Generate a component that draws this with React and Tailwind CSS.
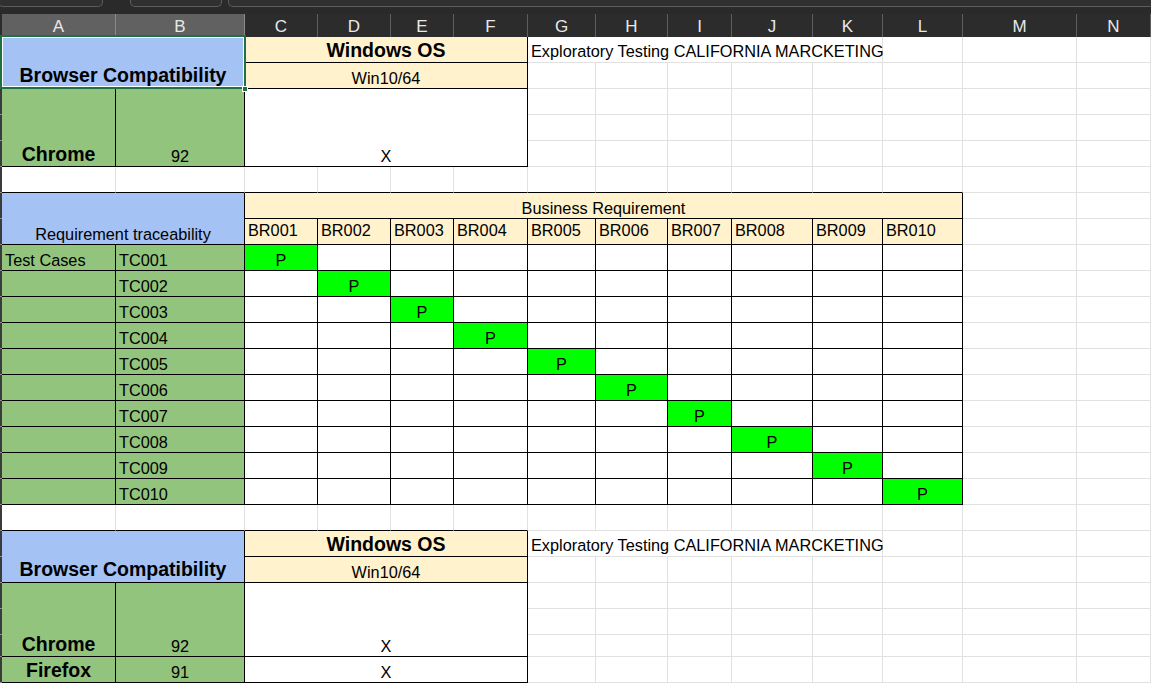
import React from "react";

const font = "font-['Liberation_Sans',Arial,sans-serif]";
const big = "text-[19.5px] font-bold leading-[24px]";
const txt = "text-[16.3px] leading-[20px]";
const tbl = "border-r border-b border-black";
const gry = "border-r border-b border-[#e1e1e1]";

const headers = ["A", "B", "C", "D", "E", "F", "G", "H", "I", "J", "K", "L", "M", "N"];

const tcRows = ["row-start-9", "row-start-10", "row-start-11", "row-start-12", "row-start-13", "row-start-14", "row-start-15", "row-start-16", "row-start-17", "row-start-18"];
const brCols = ["col-start-4", "col-start-5", "col-start-6", "col-start-7", "col-start-8", "col-start-9", "col-start-10", "col-start-11", "col-start-12", "col-start-13"];

// placed cells: at = [col, row, colSpan, rowSpan]
const cells = [
  { at: [2, 1, 2, 2], cls: `col-start-2 col-span-2 row-start-1 row-span-2 bg-[#a4c2f4] justify-center pb-[1px] ${tbl} ${big}`, body: "Browser Compatibility" },
  { at: [4, 1, 4, 1], cls: `col-start-4 col-span-4 row-start-1 bg-[#fff2cc] justify-center ${tbl} ${big}`, body: "Windows OS" },
  { at: [8, 1, 5, 1], cls: `col-start-8 col-span-5 row-start-1 bg-white pl-[3px] pb-[1px] ${gry} ${txt}`, body: "Exploratory Testing CALIFORNIA MARCKETING" },
  { at: [4, 2, 4, 1], cls: `col-start-4 col-span-4 row-start-2 bg-[#fff2cc] justify-center ${tbl} ${txt}`, body: "Win10/64" },
  { at: [2, 3, 1, 3], cls: `col-start-2 row-start-3 row-span-3 bg-[#93c47d] justify-center ${tbl} ${big}`, body: "Chrome" },
  { at: [3, 3, 1, 3], cls: `col-start-3 row-start-3 row-span-3 bg-[#93c47d] justify-center ${tbl} ${txt}`, body: "92" },
  { at: [4, 3, 4, 3], cls: `col-start-4 col-span-4 row-start-3 row-span-3 bg-white justify-center ${tbl} ${txt}`, body: "X" },

  { at: [2, 7, 2, 2], cls: `col-start-2 col-span-2 row-start-7 row-span-2 bg-[#a4c2f4] justify-center ${tbl} ${txt}`, body: "Requirement traceability" },
  { at: [4, 7, 10, 1], cls: `col-start-4 col-span-10 row-start-7 bg-[#fff2cc] justify-center ${tbl} ${txt}`, body: "Business Requirement" },
  ...brCols.map((c, i) => ({
    at: [4 + i, 8, 1, 1],
    cls: `${c} row-start-8 bg-[#fff2cc] pl-[3px] pb-[4px] ${tbl} ${txt}`,
    body: `BR${String(i + 1).padStart(3, "0")}`,
  })),
  ...tcRows.flatMap((r, i) => [
    { at: [2, 9 + i, 1, 1], cls: `col-start-2 ${r} bg-[#93c47d] pl-[3px] ${tbl} ${txt}`, body: i === 0 ? "Test Cases" : "" },
    { at: [3, 9 + i, 1, 1], cls: `col-start-3 ${r} bg-[#93c47d] pl-[3px] ${tbl} ${txt}`, body: `TC${String(i + 1).padStart(3, "0")}` },
    ...brCols.map((c, j) => ({
      at: [4 + j, 9 + i, 1, 1],
      cls: `${c} ${r} justify-center ${i === j ? "bg-[#00ff00]" : "bg-white"} ${tbl} ${txt}`,
      body: i === j ? "P" : "",
    })),
  ]),

  { at: [2, 20, 2, 2], cls: `col-start-2 col-span-2 row-start-20 row-span-2 bg-[#a4c2f4] justify-center pb-[1px] ${tbl} ${big}`, body: "Browser Compatibility" },
  { at: [4, 20, 4, 1], cls: `col-start-4 col-span-4 row-start-20 bg-[#fff2cc] justify-center ${tbl} ${big}`, body: "Windows OS" },
  { at: [8, 20, 5, 1], cls: `col-start-8 col-span-5 row-start-20 bg-white pl-[3px] pb-[1px] ${gry} ${txt}`, body: "Exploratory Testing CALIFORNIA MARCKETING" },
  { at: [4, 21, 4, 1], cls: `col-start-4 col-span-4 row-start-21 bg-[#fff2cc] justify-center ${tbl} ${txt}`, body: "Win10/64" },
  { at: [2, 22, 1, 3], cls: `col-start-2 row-start-22 row-span-3 bg-[#93c47d] justify-center ${tbl} ${big}`, body: "Chrome" },
  { at: [3, 22, 1, 3], cls: `col-start-3 row-start-22 row-span-3 bg-[#93c47d] justify-center ${tbl} ${txt}`, body: "92" },
  { at: [4, 22, 4, 3], cls: `col-start-4 col-span-4 row-start-22 row-span-3 bg-white justify-center ${tbl} ${txt}`, body: "X" },
  { at: [2, 25, 1, 1], cls: `col-start-2 row-start-25 bg-[#93c47d] justify-center ${tbl} ${big}`, body: "Firefox" },
  { at: [3, 25, 1, 1], cls: `col-start-3 row-start-25 bg-[#93c47d] justify-center ${tbl} ${txt}`, body: "91" },
  { at: [4, 25, 4, 1], cls: `col-start-4 col-span-4 row-start-25 bg-white justify-center ${tbl} ${txt}`, body: "X" },
];

const COLS = 15;
const ROWS = 25;

function emptyCls(r, c) {
  if (c === 1) return "bg-[#3b3b3b] border-b border-b-[#8d8d8d]";
  // top edge of the tables below
  if ((r === 6 && c >= 2 && c <= 13) || (r === 19 && c >= 2 && c <= 7)) {
    return "bg-white border-r border-b border-r-[#e1e1e1] border-b-black";
  }
  return `bg-white ${gry}`;
}

function emptyCells() {
  const used = new Set();
  cells.forEach(({ at: [c, r, cs, rs] }) => {
    for (let y = r; y < r + rs; y++) for (let x = c; x < c + cs; x++) used.add(`${y}:${x}`);
  });
  const out = [];
  for (let r = 1; r <= ROWS; r++) {
    for (let c = 1; c <= COLS; c++) {
      if (!used.has(`${r}:${c}`)) out.push(<div key={`e${r}-${c}`} className={emptyCls(r, c)} />);
    }
  }
  return out;
}

const colTpl = "grid-cols-[2px_114px_129px_73px_73px_63px_74px_68px_72px_64px_81px_70px_80px_114px_1fr]";

export default function App() {
  return (
    <div className={`w-[1151px] h-[683px] overflow-hidden bg-white text-black ${font}`}>
      {/* top bar */}
      <div className="h-[14px] bg-[#2a2a2a] flex">
        <div className="w-[105px] h-[7px] -ml-[2px] border-x border-b border-[#5c5c5c] rounded-b-[5px] bg-[#303030]" />
        <div className="w-[92px] h-[7px] ml-[27px] border-x border-b border-[#5c5c5c] rounded-b-[5px] bg-[#303030]" />
        <div className="flex-1 h-[7px] ml-[6px] border-l border-b border-[#5c5c5c] rounded-bl-[5px] bg-[#303030]" />
      </div>

      {/* column headers */}
      <div className={`grid ${colTpl} h-[23px] bg-[#2c2c2c] text-[#e8e8e8] text-[17px]`}>
        <div className="border-b border-[#9a9a9a]" />
        {headers.map((h, i) => (
          <div
            key={h}
            className={`flex items-center justify-center border-r border-b border-r-[#5e5e5e] border-b-[#9a9a9a] ${
              i < 2 ? "bg-[#616161] border-r-[#8a8a8a]" : ""
            }`}
          >
            {h}
          </div>
        ))}
      </div>

      {/* sheet */}
      <div className={`relative grid ${colTpl} grid-rows-[repeat(23,26px)_22px_26px]`}>
        {cells.map((c, i) => (
          <div key={i} className={`flex items-end whitespace-nowrap overflow-visible ${c.cls}`}>
            {c.body}
          </div>
        ))}
        {emptyCells()}

        {/* selection A1:B2 */}
        <div className="absolute left-0 top-[-2px] w-[246px] h-[54px] border-2 border-[#1e7145] shadow-[inset_0_0_0_1px_white] pointer-events-none" />
        <div className="absolute left-[242px] top-[49px] w-[6px] h-[6px] bg-[#1e7145] border border-white" />
      </div>
    </div>
  );
}
